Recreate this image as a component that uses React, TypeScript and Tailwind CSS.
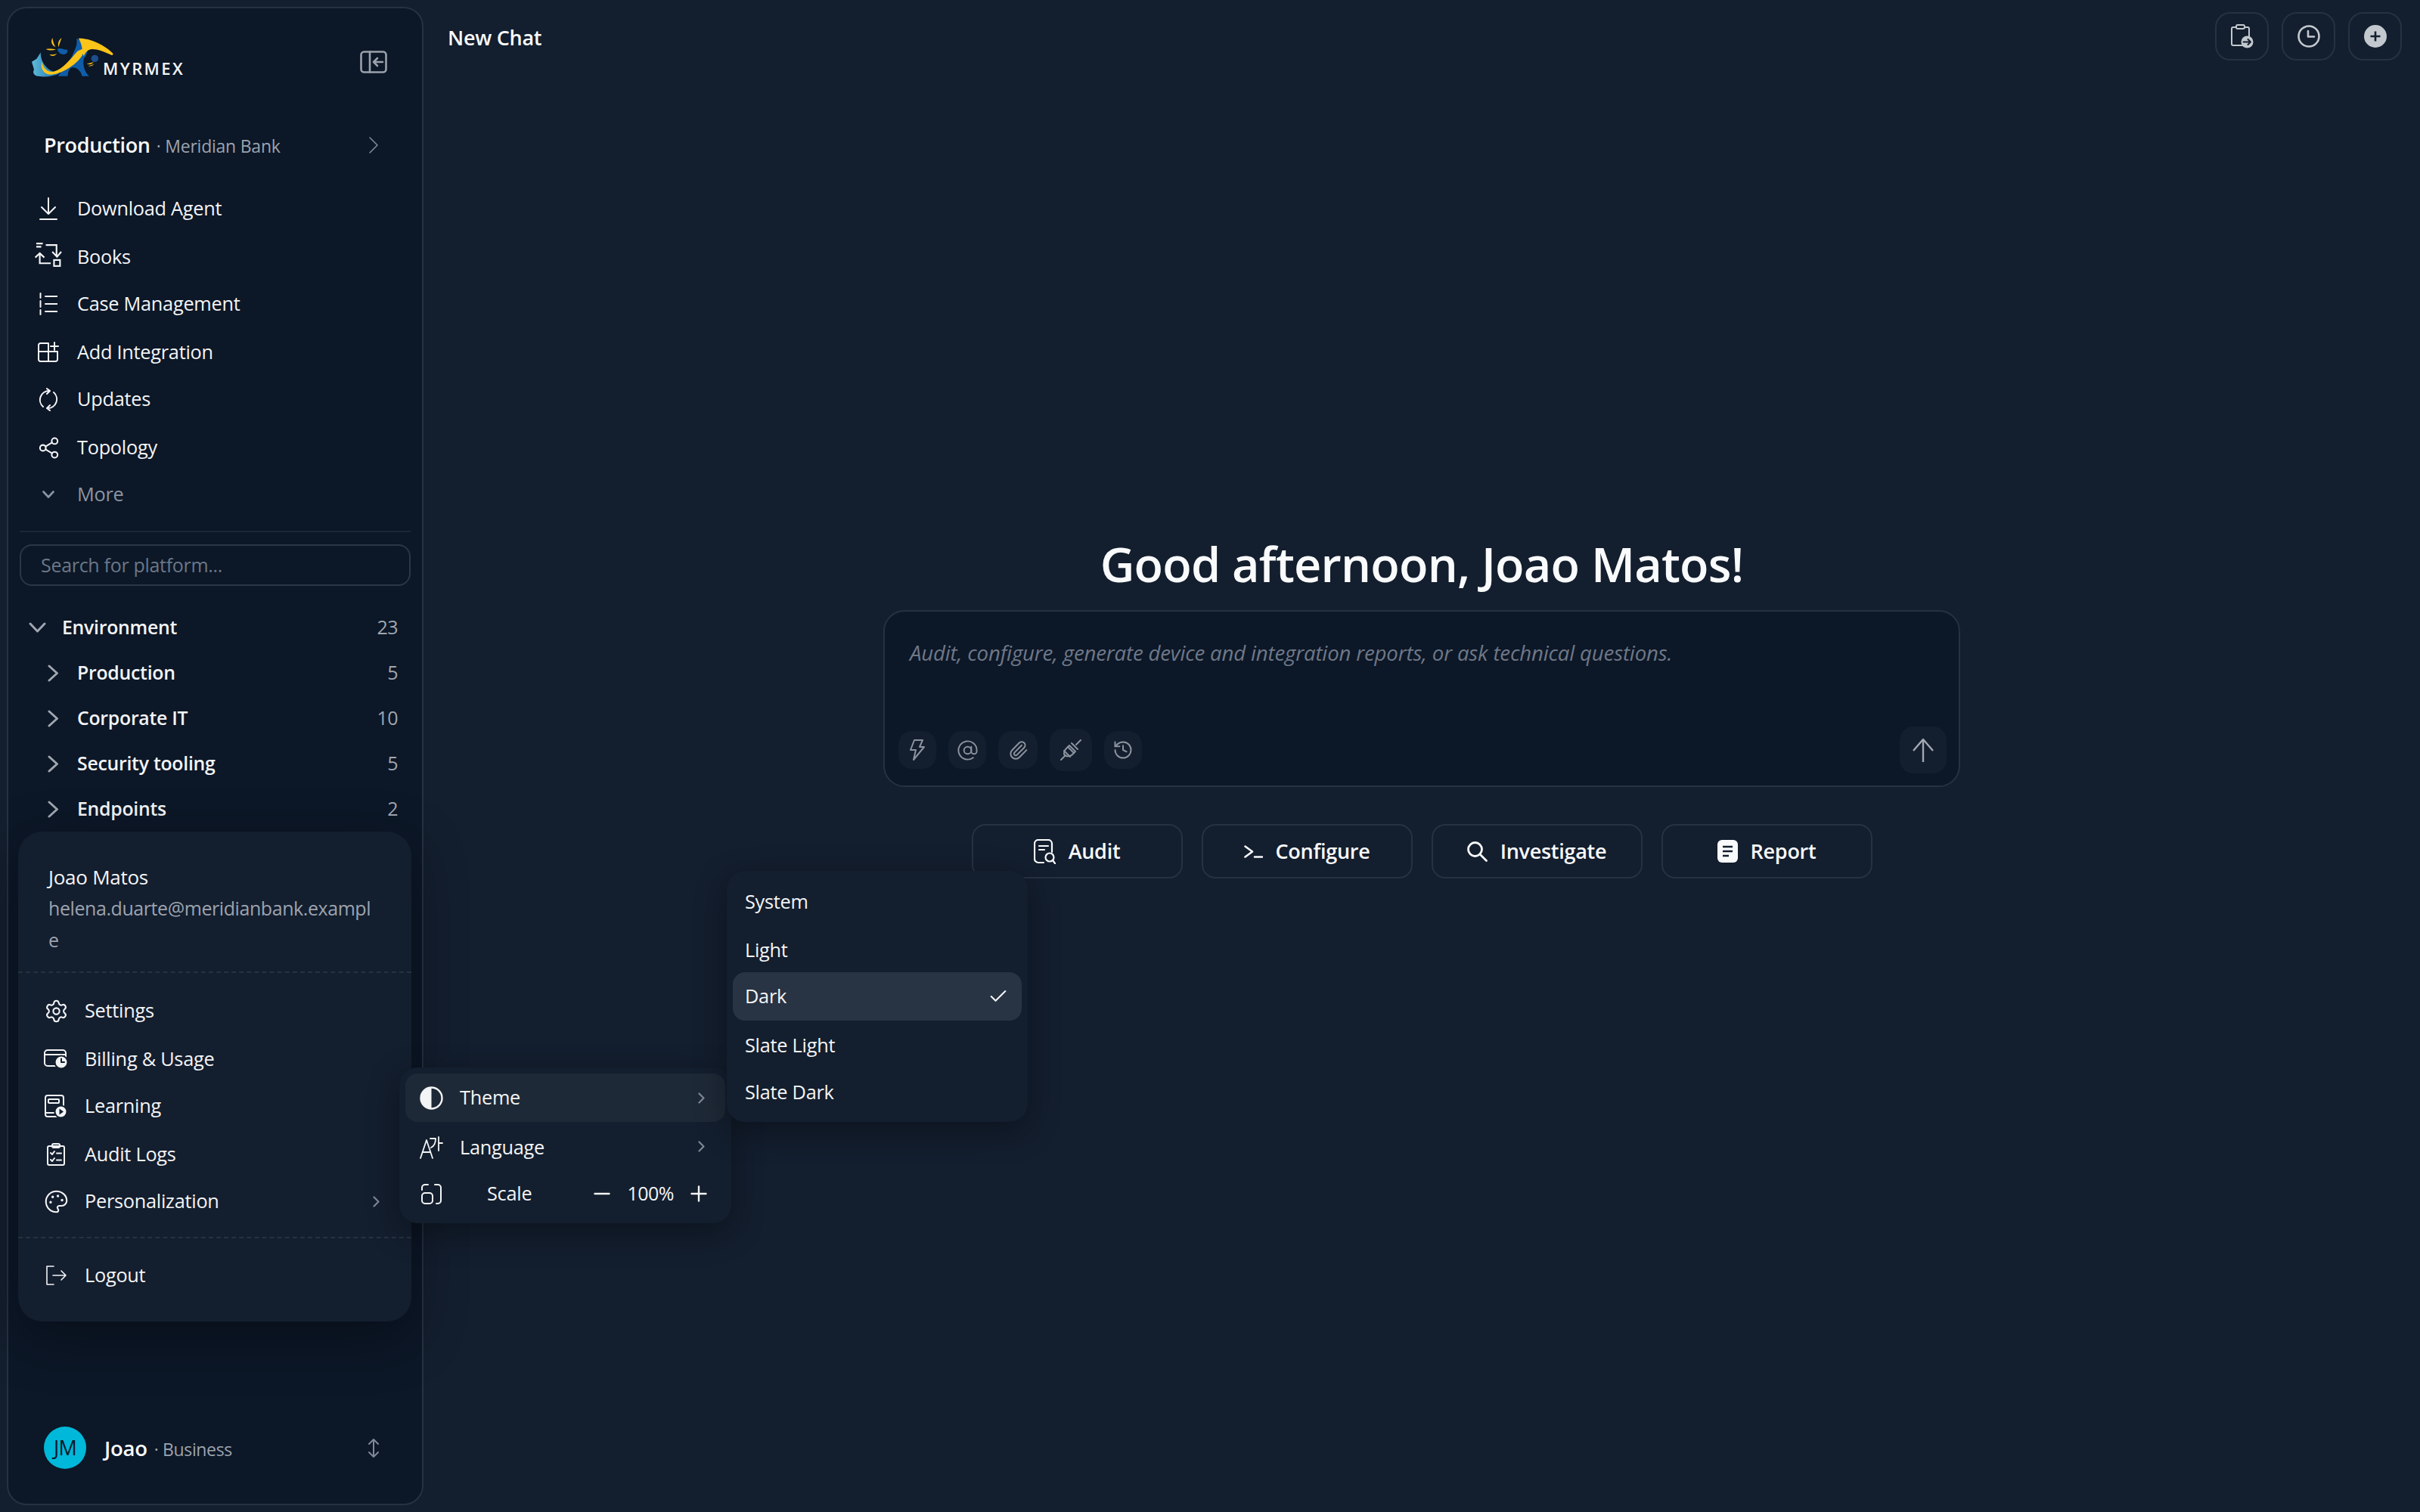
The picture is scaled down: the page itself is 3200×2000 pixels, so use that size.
import React from "react";
import { Share2, Settings, Palette, AtSign, Paperclip, History, Check } from "lucide-react";

type P = { w: number; h: number; className?: string; sw?: number; children: React.ReactNode };
const I = ({ w, h, className = "", sw = 2, children }: P) => (
  <svg width={w} height={h} viewBox={`0 0 ${w} ${h}`} fill="none" stroke="currentColor" strokeWidth={sw} strokeLinecap="round" strokeLinejoin="round" className={`shrink-0 ${className}`}>
    {children}
  </svg>
);

const Logo = () => (
  <svg width="112" height="54" viewBox="60 50 330 160" className="shrink-0">
    <defs>
      <linearGradient id="tail" x1="0" y1="0" x2="1" y2="0">
        <stop offset="0" stopColor="#5fbcd9" />
        <stop offset="1" stopColor="#1668ad" />
      </linearGradient>
    </defs>
    <path d="M100 113C98 150 125 190 175 195C150 208 110 212 82 205C72 200 68 192 74 180L65 150L84 138Z" fill="url(#tail)" />
    <path d="M168 206C190 178 212 150 224 125C234 100 246 84 240 58L262 70C292 95 284 122 270 135C262 160 272 190 290 206H262C258 186 242 172 226 172C212 172 206 190 206 206Z" fill="#0f5da8" />
    <path d="M104 150C112 182 132 192 152 188C186 180 214 142 245 108L272 96C270 125 246 150 220 168C190 190 150 206 126 198C106 190 100 172 104 150Z" fill="#fcc419" />
    <path d="M248 58C292 56 352 84 384 118L380 125C350 110 322 100 302 100C286 100 276 112 268 128C262 100 262 80 248 58Z" fill="#fcc419" />
    <path d="M165 100C178 92 190 104 204 102C208 116 196 124 184 120C174 118 168 110 165 100Z" fill="#0f5da8" />
    <circle cx="312" cy="137" r="14" fill="#1f4e8c" />
    <path d="M146 56C138 72 144 86 158 92C150 80 148 68 146 56ZM182 56C170 66 166 78 170 92C174 78 178 68 182 56ZM120 100C132 106 146 106 160 102C148 98 134 98 120 100ZM134 122C144 130 154 128 164 118C154 122 144 122 134 122ZM280 158C290 162 302 160 308 150C300 154 290 156 280 158ZM286 166C294 168 304 166 310 158C302 162 294 164 286 166Z" fill="#fcc419" />
  </svg>
);

const nav: { label: string; mt: string; icon: React.ReactNode }[] = [
  { label: "Download Agent", mt: "", icon: <I w={24} h={30} className="-mt-[1px]"><path d="M12 1V22M3 13L12 22L21 13M1 29H23" /></I> },
  { label: "Books", mt: "mt-[2px]", icon: <svg width="38" height="35" viewBox="15 30 115 105" fill="none" stroke="currentColor" strokeWidth="6.5" className="shrink-0 -mt-[7px]"><path d="M24 39H50M24 52H44M62 45H105V88M88 72L107 92L124 72M38 82V118H82M20 95L38 78L56 95" /><rect x="95" y="105" width="24" height="24" /></svg> },
  { label: "Case Management", mt: "", icon: <I w={24} h={30} sw={2}><path d="M1.5 1V7M1.5 11V19M1.5 23V29M8 5H23.5M8 15H23.5M8 25H23.5" /></I> },
  { label: "Add Integration", mt: "mt-[2px]", icon: <I w={28} h={27} className="-mt-[2px]"><path d="M14 2H3.5a2.5 2.5 0 0 0-2.5 2.5V23.5a2.5 2.5 0 0 0 2.5 2.5H23.5a2.5 2.5 0 0 0 2.5-2.5V13H1M14 2V26M22 1V11M17 6H27" /></I> },
  { label: "Updates", mt: "", icon: <I w={28} h={31}><path d="M15 4A12 12 0 0 0 7 25M13 27A12 12 0 0 0 21 6M12 1L16 4L12 8M16 23L12 27L16 30" /></I> },
  { label: "Topology", mt: "mt-[2px]", icon: <Share2 size={31} strokeWidth={1.6} className="shrink-0" /> },
];

const tree = [
  ["Production", "5"],
  ["Corporate IT", "10"],
  ["Security tooling", "5"],
  ["Endpoints", "2"],
];

const menu: { label: string; mt: string; icon: React.ReactNode; chev?: boolean }[] = [
  { label: "Settings", mt: "", icon: <Settings size={33} strokeWidth={1.5} className="shrink-0" /> },
  { label: "Billing & Usage", mt: "mt-[2px]", icon: <I w={32} h={26}><rect x="1" y="1" width="28" height="21" rx="4" /><path d="M1 7H29" /><circle cx="23" cy="17" r="8.5" fill="#f3f4f6" stroke="#131e2e" /><path d="M23 12.5V17H27" stroke="#131e2e" /></I> },
  { label: "Learning", mt: "", icon: <I w={30} h={31}><rect x="1" y="1" width="24" height="28" rx="3" /><rect x="5" y="6" width="14" height="5" rx="1" /><path d="M1 24H12" /><circle cx="21.5" cy="22.5" r="8" fill="#f3f4f6" stroke="#131e2e" /><path d="M19.5 18.5L25 22.5L19.5 26.5Z" fill="#131e2e" stroke="none" /></I> },
  { label: "Audit Logs", mt: "mt-[2px]", icon: <I w={24} h={30}><rect x="1" y="4" width="22" height="25" rx="2" /><rect x="7" y="1" width="10" height="5" rx="2" /><path d="M5 13L7 15L10 11M5 22L7 24L10 20M13 13.5H19M13 22.5H19" /></I> },
  { label: "Personalization", mt: "", icon: <Palette size={33} strokeWidth={1.5} className="shrink-0" />, chev: true },
];

const tools: { w: string; h: string; icon: React.ReactNode }[] = [
  { w: "w-[50px]", h: "h-[50px]", icon: <I w={20} h={28}><path d="M6 1H17L13 10H19L5 27L8 14H1Z" /></I> },
  { w: "w-[50px]", h: "h-[50px]", icon: <AtSign size={29} strokeWidth={1.6} /> },
  { w: "w-[52px]", h: "h-[50px]", icon: <Paperclip size={27} strokeWidth={1.8} /> },
  { w: "w-[56px]", h: "h-[56px]", icon: <I w={28} h={28}><path d="M27 1L21 7M1 27L7 21M10 10L18 18M15 5L23 13M5 15L13 23" /><path d="M12 8L20 16L16 20C13 23 8 23 6 21C4 19 5 15 8 12Z" /></I> },
  { w: "w-[50px]", h: "h-[50px]", icon: <History size={28} strokeWidth={1.7} /> },
];

const actions: { label: string; icon: React.ReactNode }[] = [
  { label: "Audit", icon: <I w={29} h={33} sw={2.2}><path d="M13 31H6a5 5 0 0 1-5-5V6a5 5 0 0 1 5-5H19a5 5 0 0 1 5 5V17M7 9H19M7 14H14M25 28L28 32" /><circle cx="21" cy="24" r="5.5" /></I> },
  { label: "Configure", icon: <I w={25} h={17} sw={2.6}><path d="M1.5 1.5L11 8.5L1.5 15.5M14 15.5H24" /></I> },
  { label: "Investigate", icon: <I w={27} h={27} sw={2.8}><circle cx="10.5" cy="10.5" r="9" /><path d="M17 17L25.5 25.5" /></I> },
  { label: "Report", icon: <svg width="27" height="30" viewBox="0 0 27 30" className="shrink-0"><rect width="27" height="30" rx="6" fill="#f9fafb" /><path d="M7 9H20M7 15H20M7 21H15" stroke="#131e2e" strokeWidth="2.6" /></svg> },
];

const themes = [
  { t: "System", c: "flex h-[62px] items-center pl-[16px]" },
  { t: "Light", c: "mt-[2px] flex h-[62px] items-center pl-[16px]" },
  { t: "Dark", c: "-mt-[2px] flex h-[64px] items-center justify-between rounded-[16px] bg-[#283343] pl-[16px] pr-[17px]" },
  { t: "Slate Light", c: "mt-[2px] flex h-[62px] items-center pl-[16px]" },
  { t: "Slate Dark", c: "flex h-[62px] items-center pl-[16px]" },
];

const HeaderBtn = ({ children }: { children: React.ReactNode }) => (
  <button className="flex h-[64px] w-[71px] items-center justify-center rounded-[20px] border-2 border-[#263141] text-[#c3c8cf]">{children}</button>
);

const Chev = ({ className = "" }: { className?: string }) => (
  <I w={9} h={15} sw={2.2} className={`text-[#7f8894] ${className}`}><path d="M1.5 1.5L7.5 7.5L1.5 13.5" /></I>
);

export default function App() {
  return (
    <div className="relative flex h-[2000px] w-[3200px] overflow-hidden bg-[#131e2e] font-['Open_Sans','Noto_Sans',sans-serif] text-[#f3f4f6]">
      {/* Sidebar */}
      <aside className="ml-[9px] mt-[9px] flex h-[1982px] w-[551px] shrink-0 flex-col rounded-[26px] border-2 border-[#263141] bg-[#0c1727]">
        <div className="flex h-[152px] items-start justify-between pl-[29px] pr-[46px] pt-[37px]">
          <div className="relative flex items-end">
            <Logo />
            <span className="-ml-[16px] text-[22px] font-semibold leading-[24px] tracking-[0.11em] text-[#f3f4f6]">MYRMEX</span>
          </div>
          <I w={36} h={30} sw={2.6} className="mt-[19px] text-[#9aa1ab]"><rect x="1.5" y="1.5" width="33" height="27" rx="4" /><path d="M13 1.5V28.5M30 15H18M23 10L18 15L23 20" /></I>
        </div>
        <div className="-mt-[1px] flex h-[60px] items-center justify-between pl-[47px] pr-[58px]">
          <div className="flex items-baseline">
            <span className="text-[27px] font-semibold tracking-[-0.012em] text-[#f9fafb]">Production</span>
            <span className="ml-[8px] text-[23px] tracking-[-0.01em] text-[#9ca3af]">· Meridian Bank</span>
          </div>
          <I w={12} h={22} sw={1.6} className="text-[#7f8894]"><path d="M1 1L11 11L1 21" /></I>
        </div>
        <nav className="mt-[23px] flex flex-col">
          {nav.map((n) => (
            <div key={n.label} className={`flex h-[62px] items-center gap-[18px] pl-[33px] ${n.mt}`}>
              <span className="flex w-[40px] justify-center text-[#f3f4f6]">{n.icon}</span>
              <span className="text-[25.3px] tracking-[-0.01em]">{n.label}</span>
            </div>
          ))}
          <div className="flex h-[62px] items-center gap-[18px] pl-[33px]">
            <span className="flex w-[40px] justify-center text-[#8b95a3]">
              <I w={16} h={10} sw={2.6}><path d="M1.5 1.5L8 8.5L14.5 1.5" /></I>
            </span>
            <span className="text-[25.3px] tracking-[-0.01em] text-[#8b95a3]">More</span>
          </div>
        </nav>
        <div className="mx-[15px] mt-[17px] h-[2px] bg-[#1c2838]" />
        <div className="mx-[15px] mt-[16px] flex h-[55px] items-center rounded-[16px] border-2 border-[#2b3646] pl-[26px] text-[25px] tracking-[-0.012em] text-[#6b7787]">Search for platform...</div>
        <div className="mt-[25px] flex flex-col font-semibold">
          <div className="flex h-[60px] items-center pl-[27px] pr-[32px]">
            <I w={23} h={14} sw={3} className="text-[#a0a6b0]"><path d="M2 2L11.5 12L21 2" /></I>
            <span className="ml-[21px] flex-1 text-[24.8px] tracking-[-0.01em]">Environment</span>
            <span className="text-[25px] font-normal tracking-[-0.02em] text-[#a0a6b0]">23</span>
          </div>
          {tree.map(([a, b]) => (
            <div key={a} className="flex h-[60px] items-center pl-[52px] pr-[32px]">
              <I w={15} h={23} sw={3} className="text-[#a0a6b0]"><path d="M2 2L12.5 11.5L2 21" /></I>
              <span className="ml-[24px] flex-1 text-[24.8px] tracking-[-0.01em]">{a}</span>
              <span className="text-[25px] font-normal tracking-[-0.02em] text-[#a0a6b0]">{b}</span>
            </div>
          ))}
        </div>
        <div className="mt-auto flex items-center pb-[46px] pl-[47px] pr-[56px]">
          <span className="flex h-[56px] w-[56px] items-center justify-center rounded-full bg-[#00b8d9] text-[27px] tracking-[-0.03em] text-[#0c1727]">JM</span>
          <div className="ml-[24px] mt-[2px] flex flex-1 items-baseline">
            <span className="text-[27.5px] font-semibold tracking-[-0.01em] text-[#f9fafb]">Joao</span>
            <span className="ml-[9px] text-[23px] tracking-[-0.015em] text-[#9ca3af]">· Business</span>
          </div>
          <I w={16} h={25} sw={2} className="text-[#7f8894]"><path d="M8 1V24M2 7L8 1L14 7M2 18L8 24L14 18" /></I>
        </div>
      </aside>

      {/* Main */}
      <main className="flex min-w-0 flex-1 flex-col">
        <header className="flex h-[96px] items-start justify-between pl-[32px] pr-[24px] pt-[16px]">
          <h1 className="mt-[14px] text-[27px] font-semibold leading-[40px] tracking-[-0.01em] text-[#f9fafb]">New Chat</h1>
          <div className="flex gap-[17px]">
            <HeaderBtn>
              <I w={30} h={32}><rect x="1" y="4" width="23" height="24" rx="2" /><rect x="7" y="1" width="11" height="5" rx="2" fill="#131e2e" /><circle cx="21.5" cy="23.5" r="8" fill="#c3c8cf" stroke="none" /><path d="M16.5 23.5H26M22.5 20L26 23.5L22.5 27" stroke="#131e2e" /></I>
            </HeaderBtn>
            <HeaderBtn>
              <I w={30} h={30} sw={2.6}><circle cx="15" cy="15" r="13.5" /><path d="M14 8V15.5H22" /></I>
            </HeaderBtn>
            <HeaderBtn>
              <svg width="30" height="30" viewBox="0 0 30 30"><circle cx="15" cy="15" r="15" fill="#c3c8cf" /><path d="M15 8.5V21.5M8.5 15H21.5" stroke="#131e2e" strokeWidth="2.6" /></svg>
            </HeaderBtn>
          </div>
        </header>
        <div className="flex flex-col items-center pt-[608px]">
          <h2 className="text-[63px] font-semibold leading-[84px] tracking-[-0.012em] text-[#f9fafb]">Good afternoon, Joao Matos!</h2>
          <div className="mt-[19px] flex h-[234px] w-[1424px] flex-col rounded-[28px] border-2 border-[#263141] bg-[#0c1727] pb-[16px] pl-[18px] pr-[16px]">
            <p className="ml-[15px] mt-[34px] text-[27.6px] italic leading-[40px] tracking-[-0.006em] text-[#6f7887]">Audit, configure, generate device and integration reports, or ask technical questions.</p>
            <div className="mt-auto flex items-center justify-between">
              <div className="flex items-center gap-[16px]">
                {tools.map((t, i) => (
                  <span key={i} className={`flex items-center justify-center rounded-[18px] bg-[#131e2e] text-[#8c939e] ${t.w} ${t.h}`}>{t.icon}</span>
                ))}
              </div>
              <span className="flex h-[62px] w-[62px] items-center justify-center rounded-[18px] bg-[#131e2e] text-[#a2a8b2]">
                <I w={30} h={33} sw={2.4}><path d="M15 32V2M2 17L15 2L28 17" strokeLinecap="butt" /></I>
              </span>
            </div>
          </div>
          <div className="mt-[49px] flex gap-[25px]">
            {actions.map((a) => (
              <button key={a.label} className="flex h-[72px] w-[279px] items-center justify-center gap-[17px] rounded-[18px] border-2 border-[#263141] text-[27px] font-semibold tracking-[-0.01em] text-[#f9fafb]">
                {a.icon}
                {a.label}
              </button>
            ))}
          </div>
        </div>
      </main>

      {/* Account menu */}
      <div className="absolute left-[24px] top-[1100px] flex h-[648px] w-[520px] flex-col rounded-[32px] bg-[#131e2e] shadow-[0_20px_70px_rgba(0,0,0,0.35)]">
        <div className="h-[187px] border-b-2 border-dashed border-[#263141] pl-[40px] pr-[48px] pt-[40px]">
          <div className="text-[26px] leading-[40px] tracking-[-0.01em]">Joao Matos</div>
          <div className="break-all text-[25px] leading-[42px] tracking-[-0.017em] text-[#9ca3af]">helena.duarte@meridianbank.example</div>
        </div>
        <div className="flex flex-col pt-[19px]">
          {menu.map((m) => (
            <div key={m.label} className={`flex h-[62px] items-center pl-[32px] pr-[42px] ${m.mt}`}>
              <span className="flex w-[36px] justify-center">{m.icon}</span>
              <span className="ml-[20px] flex-1 text-[25.3px] tracking-[-0.01em]">{m.label}</span>
              {m.chev && <Chev />}
            </div>
          ))}
        </div>
        <div className="mt-[16px] border-t-2 border-dashed border-[#263141]" />
        <div className="mt-[18px] flex h-[62px] items-center pl-[32px]">
          <span className="flex w-[36px] justify-center">
            <I w={27} h={26} sw={1.6}><path d="M10 1H1V25H10M9 13H26M20 7L26 13L20 19" /></I>
          </span>
          <span className="ml-[20px] text-[25.3px] tracking-[-0.01em]">Logout</span>
        </div>
      </div>

      {/* Personalization submenu */}
      <div className="absolute left-[528px] top-[1412px] flex h-[206px] w-[439px] flex-col rounded-[24px] bg-[#131e2e] px-[8px] pt-[8px] shadow-[0_12px_40px_rgba(0,0,0,0.35)]">
        <div className="flex h-[64px] items-center rounded-[16px] bg-[#1e2937] pl-[19px] pr-[27px]">
          <svg width="31" height="31" viewBox="0 0 31 31" className="shrink-0"><circle cx="15.5" cy="15.5" r="14" fill="none" stroke="#f3f4f6" strokeWidth="2.4" /><path d="M15.5 1.5A14 14 0 0 0 15.5 29.5Z" fill="#f3f4f6" /></svg>
          <span className="ml-[22px] flex-1 text-[25.3px] tracking-[-0.01em]">Theme</span>
          <Chev />
        </div>
        <div className="mt-[3px] flex h-[62px] items-center pl-[19px] pr-[27px]">
          <I w={31} h={30} sw={1.8}><path d="M1 29L9 5L17 29M4 21H14M14 3H21C21 9 19 13 15 15M25 1V19M25 9H30" /></I>
          <span className="ml-[22px] flex-1 text-[25.3px] tracking-[-0.01em]">Language</span>
          <Chev className="-mt-[4px]" />
        </div>
        <div className="flex h-[60px] items-center pl-[21px] pr-[24px]">
          <I w={27} h={27} sw={2}><rect x="1" y="12" width="14" height="14" rx="4" /><path d="M1 8V5a4 4 0 0 1 4-4H9M18 1H22a4 4 0 0 1 4 4V22a4 4 0 0 1-4 4H20" /></I>
          <span className="ml-[60px] flex-1 text-[25.3px] tracking-[-0.01em]">Scale</span>
          <I w={22} h={4} sw={2.4}><path d="M1.5 2H20.5" /></I>
          <span className="ml-[22px] mr-[22px] text-[25px] tracking-[-0.02em]">100%</span>
          <I w={22} h={22} sw={2.4}><path d="M1.5 11H20.5M11 1.5V20.5" /></I>
        </div>
      </div>

      {/* Theme submenu */}
      <div className="absolute left-[961px] top-[1152px] flex h-[332px] w-[398px] flex-col rounded-[24px] bg-[#131e2e] px-[8px] pt-[10px] shadow-[0_12px_40px_rgba(0,0,0,0.35)]">
        {themes.map(({ t, c }) => (
          <div key={t} className={c}>
            <span className="text-[25.3px] tracking-[-0.01em]">{t}</span>
            {t === "Dark" && <Check size={28} strokeWidth={1.8} />}
          </div>
        ))}
      </div>
    </div>
  );
}
